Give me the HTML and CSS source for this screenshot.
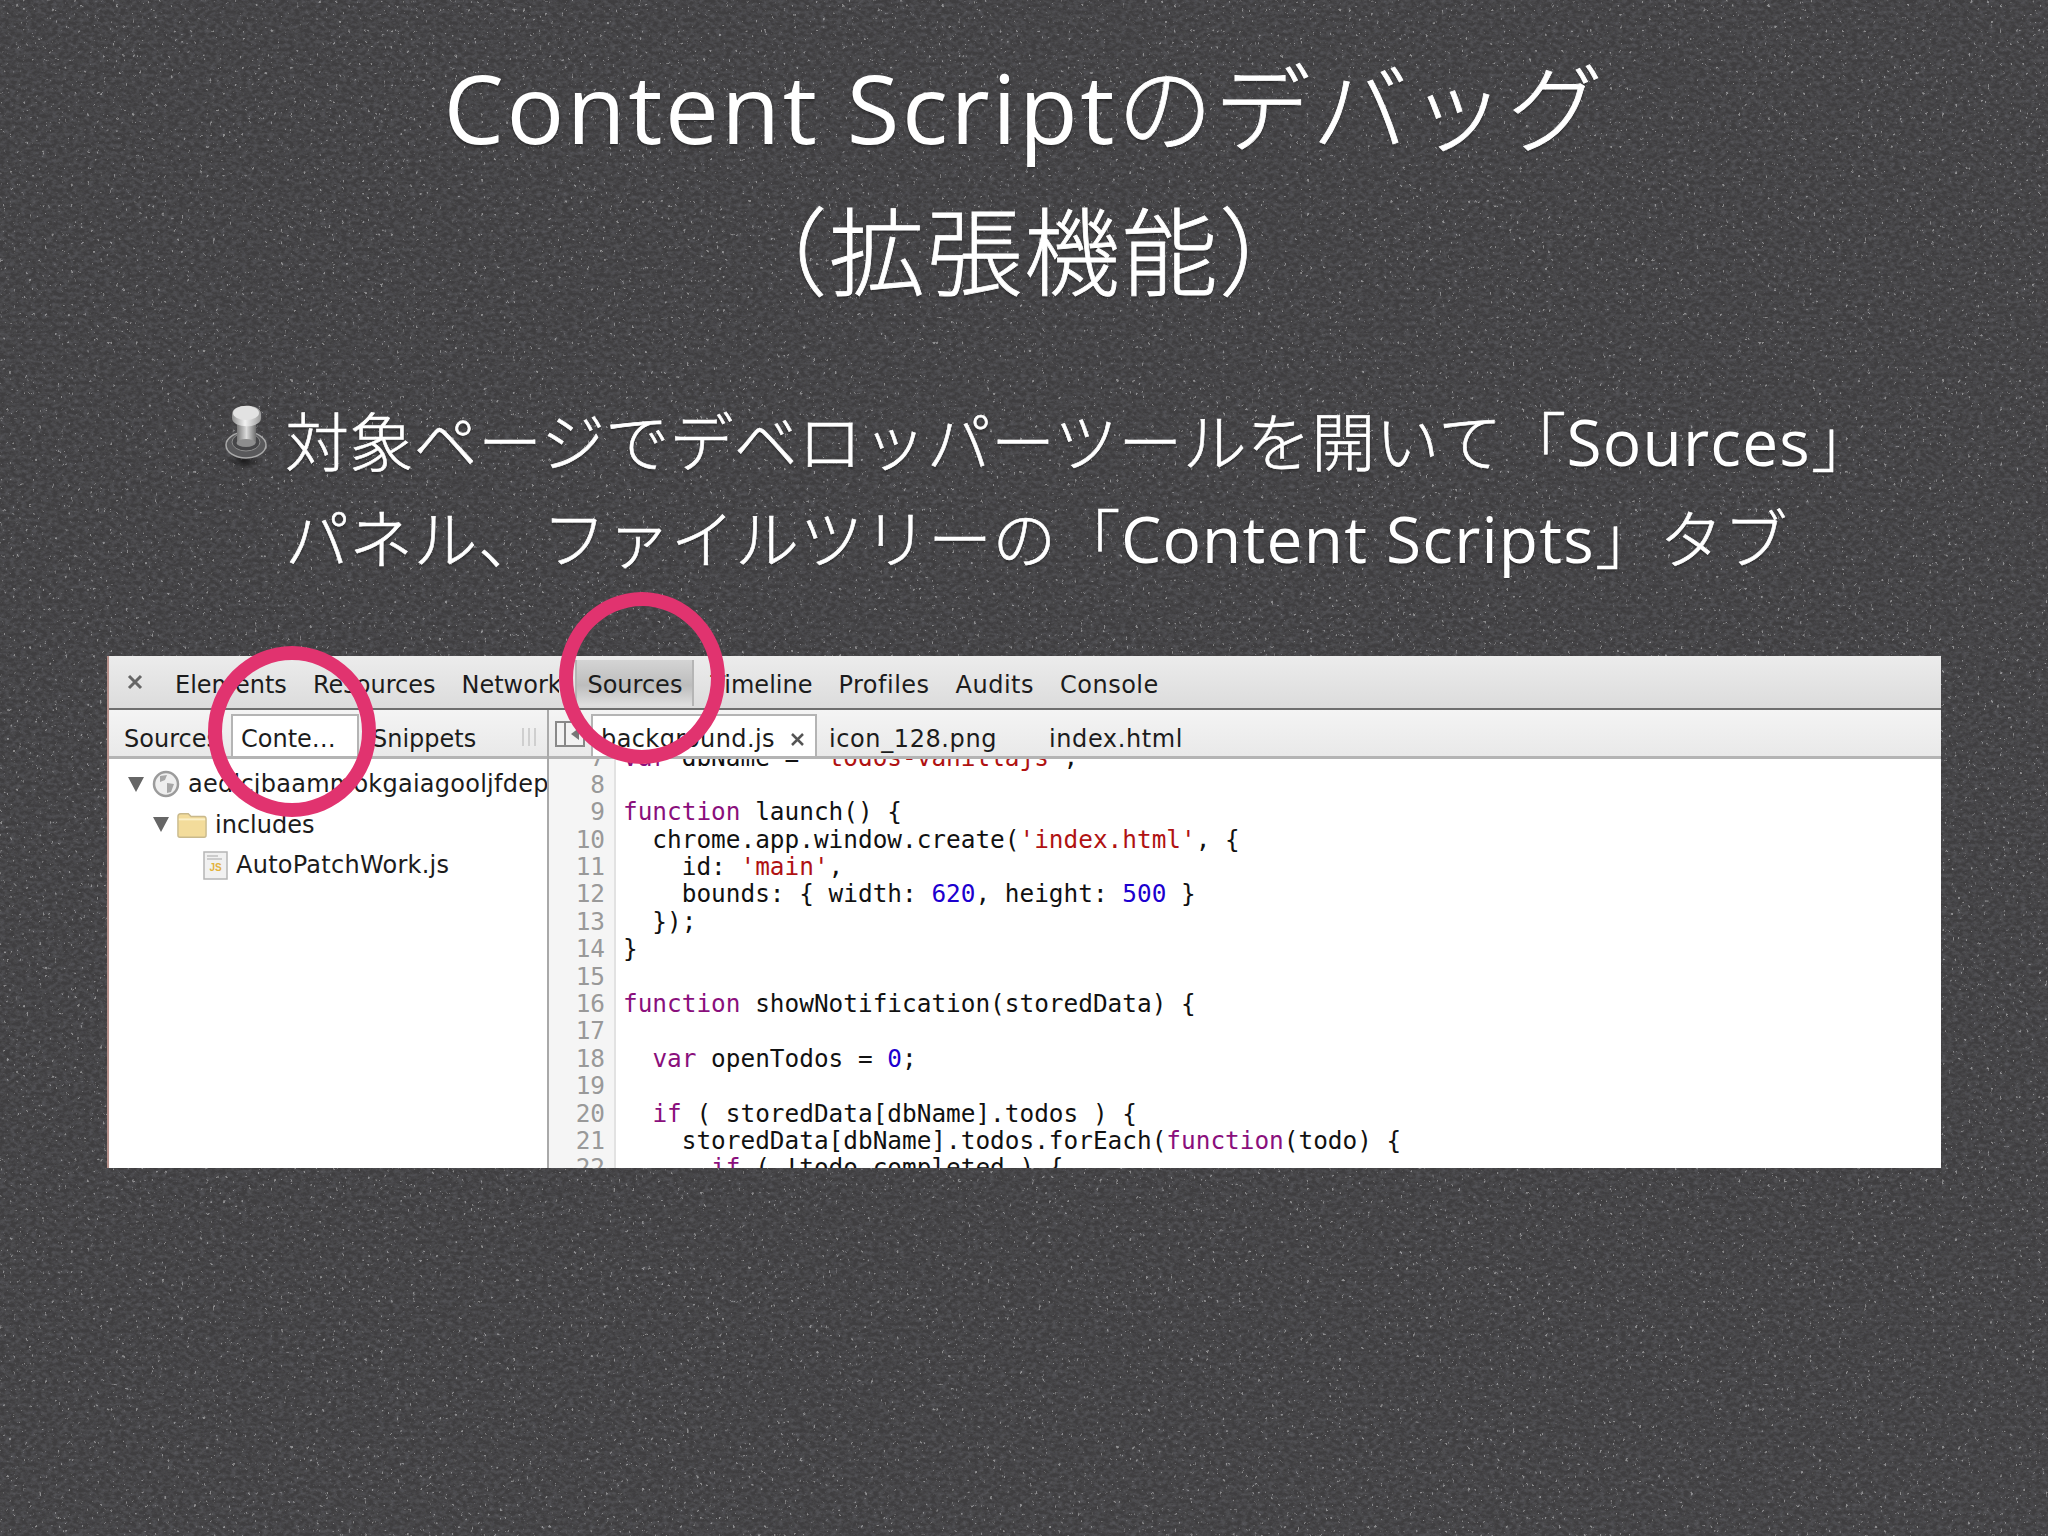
FILE: index.html
```html
<!DOCTYPE html>
<html lang="ja">
<head>
    <meta charset="UTF-8">
    <title>Content Scriptのデバッグ（拡張機能）</title>
    <link rel="stylesheet" href="styles.css">
</head>
<body>
    <svg class="grain" width="2048" height="1536" aria-hidden="true">
        <defs>
            <filter id="mottle" x="0" y="0" width="100%" height="100%">
                <feTurbulence type="fractalNoise" baseFrequency="0.19 0.27" numOctaves="4" seed="7"/>
                <feColorMatrix type="matrix" values="0 0 0 0 0.1  0 0 0 0 0.1  0 0 0 0 0.11  1.7 0 0 0 -0.6"/>
                <feGaussianBlur stdDeviation="0.7"/>
            </filter>
            <filter id="specks" x="0" y="0" width="100%" height="100%">
                <feTurbulence type="fractalNoise" baseFrequency="0.31 0.24" numOctaves="4" seed="23"/>
                <feColorMatrix type="matrix" values="0 0 0 0 0.8  0 0 0 0 0.8  0 0 0 0 0.8  0 9 0 0 -6.4"/>
                <feGaussianBlur stdDeviation="0.6"/>
            </filter>
        </defs>
        <rect width="2048" height="1536" filter="url(#mottle)"/>
        <rect width="2048" height="1536" filter="url(#specks)" opacity="0.45"/>
    </svg>

    <main class="slide">
        <h1 class="title"><span class="latin">Content Script</span>のデバッグ<br>（拡張機能）</h1>

        <div class="point">
            <svg class="pin" width="46" height="66" viewBox="0 0 46 66">
                <defs>
                    <linearGradient id="pinHead" x1="0" y1="0" x2="1" y2="0">
                        <stop offset="0" stop-color="#8f8f8f"/>
                        <stop offset="0.45" stop-color="#f2f2f2"/>
                        <stop offset="1" stop-color="#9a9a9a"/>
                    </linearGradient>
                    <linearGradient id="pinBody" x1="0" y1="0" x2="1" y2="0">
                        <stop offset="0" stop-color="#777"/>
                        <stop offset="0.5" stop-color="#dcdcdc"/>
                        <stop offset="1" stop-color="#6c6c6c"/>
                    </linearGradient>
                    <radialGradient id="pinShadow">
                        <stop offset="0" stop-color="#000" stop-opacity="0.6"/>
                        <stop offset="1" stop-color="#000" stop-opacity="0"/>
                    </radialGradient>
                </defs>
                <ellipse cx="19" cy="57" rx="17" ry="8" fill="url(#pinShadow)"/>
                <ellipse cx="21" cy="41" rx="20" ry="13" fill="#59595b" stroke="#a9a9a9" stroke-width="1.5"/>
                <ellipse cx="21" cy="38" rx="14" ry="9" fill="#464648" stroke="#8c8c8c"/>
                <rect x="12" y="20" width="19" height="19" fill="url(#pinBody)"/>
                <ellipse cx="21" cy="39" rx="9.500" ry="4" fill="#8d8d8d"/>
                <path d="M7 10 C7 -1 36 -1 36 10 L36 14 C36 25 7 25 7 14 Z" fill="url(#pinHead)"/>
                <ellipse cx="21" cy="9" rx="13" ry="7" fill="#e2e2e2"/>
            </svg>
            <p class="point-text">対象ページでデベロッパーツールを開いて「<span class="latin">Sources</span>」<br>パネル、ファイルツリーの「<span class="latin">Content Scripts</span>」タブ</p>
        </div>

        <section class="shot">
            <nav class="toolbar">
                <svg class="close" width="16" height="16" viewBox="0 0 16 16"><path d="M2 2 L14 14 M14 2 L2 14"/></svg>
                <span>Elements</span>
                <span>Resources</span>
                <span class="tab-clip">Network</span>
                <span class="tab-active">Sources</span>
                <span>Timeline</span>
                <span class="tab-wide">Profiles</span>
                <span class="tab-wide">Audits</span>
                <span class="tab-wide">Console</span>
            </nav>

            <div class="panes">
                <aside class="sidebar">
                    <div class="subtabs">
                        <span class="sub-first">Sources</span>
                        <span class="sub-on">Conte…</span>
                        <span class="sub-snip">Snippets</span>
                        <svg class="grip" width="16" height="20" viewBox="0 0 16 20"><path d="M2 1 V19 M8 1 V19 M14 1 V19"/></svg>
                    </div>
                    <ul class="tree">
                        <li class="tree-row">
                            <i class="arrow"></i>
                            <svg class="tree-icon" width="28" height="28" viewBox="0 0 28 28">
                                <circle cx="14" cy="14" r="12" fill="#eeeeee" stroke="#9b9b9b" stroke-width="2.500"/>
                                <path d="M8 6 L15 5 L13 10 L8 12 Z M15 13 L22 14 L19 22 L15 23 Z" fill="#a6a6a6"/>
                            </svg>
                            <span class="file-name">aedlcjbaammokgaiagooljfdep</span>
                        </li>
                        <li class="tree-row tree-folder">
                            <i class="arrow"></i>
                            <svg class="tree-icon" width="30" height="28" viewBox="0 0 32 28">
                                <path d="M1 5 Q1 2 4 2 H12 L15 5 H29 Q31 5 31 8 V25 Q31 27 29 27 H3 Q1 27 1 25 Z" fill="#f3dc9b" stroke="#c9b98c" stroke-width="1.500"/>
                                <path d="M2 8 H30" stroke="#fbf0c9" stroke-width="2"/>
                            </svg>
                            <span>includes</span>
                        </li>
                        <li class="tree-row tree-file">
                            <svg class="tree-icon" width="25" height="29" viewBox="0 0 25 29">
                                <rect x="1" y="1" width="23" height="27" fill="#f1f1f1" stroke="#b5b5b5" stroke-width="1.500"/>
                                <path d="M4 5 H15 M4 8 H19" stroke="#c0c0c0" stroke-width="1.500"/>
                                <text class="js-mark" x="12.500" y="20">JS</text>
                            </svg>
                            <span class="file-name">AutoPatchWork.js</span>
                        </li>
                    </ul>
                </aside>

                <div class="editor">
                    <div class="filetabs">
                        <svg class="side-btn" width="30" height="26" viewBox="0 0 30 26">
                            <rect x="1" y="1" width="28" height="24" fill="#f2f2f2" stroke="#888" stroke-width="2"/>
                            <path d="M10 1 V25" stroke="#888" stroke-width="2"/>
                            <path d="M24 7 L16 13 L24 19 Z" fill="#777"/>
                        </svg>
                        <span class="file-on">background.js<svg class="file-x" width="15" height="15" viewBox="0 0 15 15"><path d="M2 2 L13 13 M13 2 L2 13"/></svg></span>
                        <span class="file-icon">icon_128.png</span>
                        <span class="file-last">index.html</span>
                    </div>
                    <div class="code">
<div class="ln"><b>7</b><code><s>var</s> dbName = <q>'todos-vanillajs'</q>;</code></div>
<div class="ln"><b>8</b><code></code></div>
<div class="ln"><b>9</b><code><s>function</s> launch() {</code></div>
<div class="ln"><b>10</b><code>  chrome.app.window.create(<q>'index.html'</q>, {</code></div>
<div class="ln"><b>11</b><code>    id: <q>'main'</q>,</code></div>
<div class="ln"><b>12</b><code>    bounds: { width: <u>620</u>, height: <u>500</u> }</code></div>
<div class="ln"><b>13</b><code>  });</code></div>
<div class="ln"><b>14</b><code>}</code></div>
<div class="ln"><b>15</b><code></code></div>
<div class="ln"><b>16</b><code><s>function</s> showNotification(storedData) {</code></div>
<div class="ln"><b>17</b><code></code></div>
<div class="ln"><b>18</b><code>  <s>var</s> openTodos = <u>0</u>;</code></div>
<div class="ln"><b>19</b><code></code></div>
<div class="ln"><b>20</b><code>  <s>if</s> ( storedData[dbName].todos ) {</code></div>
<div class="ln"><b>21</b><code>    storedData[dbName].todos.forEach(<s>function</s>(todo) {</code></div>
<div class="ln"><b>22</b><code>      <s>if</s> ( !todo.completed ) {</code></div>
                    </div>
                </div>
            </div>

            <div class="ring ring-left"></div>
            <div class="ring ring-right"></div>
        </section>
    </main>
</body>
</html>
```

FILE: styles.css
```css
html, body {
    margin: 0;
    height: 100%;
}

body {
    position: relative;
    width: 2048px;
    height: 1536px;
    overflow: hidden;
    background-color: #3f3e40;
    color: #fff;
    font-family: "Open Sans", "Noto Sans CJK JP", sans-serif;
}

.grain {
    position: absolute;
    top: 0;
    left: 0;
    display: block;
}

.slide {
    position: relative;
    padding-top: 35px;
}

.title {
    margin: 0;
    font-size: 96px;
    font-weight: 300;
    line-height: 144px;
    letter-spacing: 1.5px;
    text-align: center;
    -webkit-text-stroke: 0.8px #fff;
    text-shadow: 0 2px 3px rgba(0, 0, 0, 0.4);
}

.title .latin {
    font-weight: 400;
    letter-spacing: 2.5px;
    -webkit-text-stroke: 0;
}

.point {
    display: flex;
    align-items: flex-start;
    gap: 14px;
    margin: 70px 0 69px 225px;
}

.pin {
    flex: none;
    margin-top: 11px;
}

.point-text {
    margin: 0;
    font-size: 64px;
    font-weight: 300;
    line-height: 97px;
    letter-spacing: 0.3px;
    white-space: nowrap;
    -webkit-text-stroke: 0.6px #fff;
    text-shadow: 0 2px 3px rgba(0, 0, 0, 0.4);
}

.point-text .latin {
    font-weight: 400;
    letter-spacing: 1.2px;
    -webkit-text-stroke: 0;
}

/* devtools screenshot */
.shot {
    position: relative;
    width: 1832px;
    height: 512px;
    margin-left: 107px;
    border-left: 2px solid #b7908a;
    background: #fff;
    color: #1c1c1c;
    font-family: "DejaVu Sans", sans-serif;
    font-size: 24px;
}

.toolbar {
    display: flex;
    align-items: center;
    gap: 26px;
    box-sizing: border-box;
    height: 54px;
    padding: 6px 0 0 18px;
    background: linear-gradient(#ececec, #dcdcdc);
    border-bottom: 2px solid #6f6f6f;
    white-space: nowrap;
}

.close {
    margin-right: 6px;
    margin-top: -6px;
    fill: none;
    stroke: #666;
    stroke-width: 3;
}

.tab-clip {
    width: 98px;
    overflow: hidden;
}

.tab-wide {
    letter-spacing: 0.5px;
}

.tab-active {
    display: flex;
    align-items: center;
    height: 46px;
    margin: -4px -10px 0;
    padding: 4px 10px 0;
    box-sizing: border-box;
    background: linear-gradient(#d4d4d4, #bdbdbd 55%, #e0e0e0);
    border-left: 2px solid #b5b5b5;
    border-right: 2px solid #b5b5b5;
}

.panes {
    display: flex;
    height: 458px;
}

.sidebar {
    flex: none;
    box-sizing: border-box;
    width: 440px;
    overflow: hidden;
    border-right: 2px solid #a9a9a9;
}

.subtabs,
.filetabs {
    display: flex;
    align-items: flex-end;
    box-sizing: border-box;
    height: 49px;
    background: linear-gradient(#f4f4f4, #e9e9e9);
    border-bottom: 3px solid #b4b4b4;
    white-space: nowrap;
}

.subtabs > span,
.filetabs > span {
    line-height: 34px;
}

.sub-first {
    width: 103px;
    margin-right: 19px;
    padding-left: 15px;
    box-sizing: border-box;
    overflow: hidden;
}

.subtabs > .sub-on {
    box-sizing: border-box;
    width: 128px;
    height: 42px;
    padding-left: 8px;
    line-height: 46px;
    background: #fff;
    border: 2px solid #b4b4b4;
    border-bottom: 0;
}

.sub-snip {
    margin-left: 13px;
}

.grip {
    margin: 0 0 9px 45px;
    fill: none;
    stroke: #cfcfcf;
    stroke-width: 2;
}

.tree {
    margin: 0;
    padding: 5px 0 0;
    list-style: none;
}

.tree-row {
    display: flex;
    align-items: center;
    height: 40.5px;
    padding-left: 19px;
    white-space: nowrap;
}

.tree-folder {
    padding-left: 44px;
}

.tree-file {
    padding-left: 94px;
}

.file-name {
    letter-spacing: 0.25px;
}

.arrow {
    flex: none;
    width: 0;
    height: 0;
    margin-right: 8px;
    border-left: 8px solid transparent;
    border-right: 8px solid transparent;
    border-top: 15px solid #666;
}

.tree-icon {
    flex: none;
    margin-right: 8px;
}

.js-mark {
    font-family: "Liberation Sans", sans-serif;
    font-size: 10px;
    font-weight: 700;
    fill: #e3b23c;
    text-anchor: middle;
}

.editor {
    flex: 1;
    min-width: 0;
    overflow: hidden;
}

.filetabs {
    position: relative;
    z-index: 1;
}

.side-btn {
    flex: none;
    margin: 0 6px 9px 6px;
}

.filetabs > .file-on {
    display: flex;
    align-items: center;
    box-sizing: border-box;
    width: 226px;
    height: 42px;
    padding: 6px 0 0 8px;
    letter-spacing: 0.4px;
    background: #fff;
    border: 2px solid #b4b4b4;
    border-bottom: 0;
}

.file-x {
    margin-left: 15px;
    fill: none;
    stroke: #555;
    stroke-width: 2.5;
}

.file-icon {
    width: 232px;
    padding-left: 12px;
    box-sizing: border-box;
    letter-spacing: 0.6px;
}

.file-last {
    letter-spacing: 0.6px;
}

.code {
    margin-top: -15.500px;
    font-family: "DejaVu Sans Mono", monospace;
    font-size: 24.4px;
    line-height: 27.4px;
    color: #111;
}

.ln {
    display: flex;
    height: 27.4px;
}

.ln b {
    flex: none;
    box-sizing: border-box;
    width: 67px;
    padding-right: 9px;
    font-weight: 400;
    text-align: right;
    color: #999;
    background: #f5f5f5;
    border-right: 2px solid #e2e2e2;
}

.ln code {
    padding-left: 7px;
    font: inherit;
    white-space: pre;
}

.ln s {
    text-decoration: none;
    color: #8a0f7c;
}

.ln q {
    quotes: none;
    color: #b01212;
}

.ln u {
    text-decoration: none;
    color: #1c00cf;
}

/* pink marker circles */
.ring {
    position: absolute;
    z-index: 2;
    box-sizing: border-box;
    border: 14px solid #e1336f;
    border-radius: 50%;
}

.ring-left {
    top: -10px;
    left: 99px;
    width: 168px;
    height: 171px;
}

.ring-right {
    top: -64px;
    left: 450px;
    width: 166px;
    height: 172px;
}
```
